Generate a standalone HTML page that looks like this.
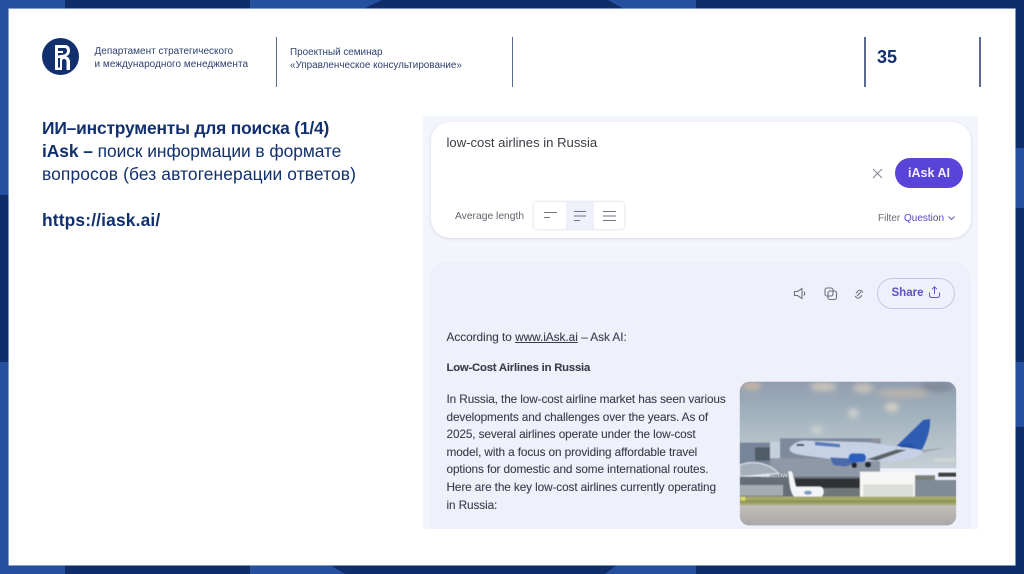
<!DOCTYPE html>
<html lang="ru"><head><meta charset="utf-8"><title>Slide 35</title>
<style>
html,body{margin:0;padding:0}
body{width:1024px;height:574px;position:relative;overflow:hidden;background:#0f2d69;font-family:"Liberation Sans",sans-serif}
#w{position:absolute;left:0;top:0;width:1024px;height:574px;overflow:hidden;filter:blur(.3px)}
.a{position:absolute;white-space:nowrap}
.l{position:absolute;background:#24509f}
.v{position:absolute;width:1.5px;background:#5a6a90;top:37px;height:50px}
.ink{color:#3a3d46;font-size:11.8px;left:446.5px;line-height:17.5px;letter-spacing:-.11px;-webkit-text-stroke:.1px #3a3d46}
.h{color:#12306d;font-size:17.4px;left:42px;line-height:23px}
</style></head><body><div id="w">
<div class="l" style="left:0;top:0;width:65px;height:9px"></div>
<div class="l" style="left:250px;top:0;width:446px;height:9px"></div>
<svg class="a" style="left:0;top:0" width="1024" height="9"><path d="M382 0H608L624 9H363Z" fill="#0f2d69"/></svg>
<div class="l" style="left:0;top:565px;width:65px;height:9px"></div>
<div class="l" style="left:250px;top:565px;width:446px;height:9px"></div>
<svg class="a" style="left:0;top:565px" width="1024" height="9"><path d="M330 0H617L605 9H345Z" fill="#0f2d69"/></svg>
<div class="l" style="left:0;top:0;width:9px;height:195px"></div>
<div class="l" style="left:0;top:362px;width:9px;height:212px"></div>
<div class="l" style="left:1015px;top:362px;width:9px;height:65px"></div>
<div class="l" style="left:1015px;top:148px;width:9px;height:60px"></div>

<div class="a" style="left:9px;top:9px;width:1006px;height:556px;background:#fff;box-shadow:0 0 0 .7px #a9c0e6"></div>

<svg class="a" style="left:42px;top:38px" width="37" height="37" viewBox="0 0 37 37">
<circle cx="18.5" cy="18.5" r="18.5" fill="#12306d"/>
<path d="M13 7H23C26.500 7 28 9.500 28 12.500C28 15.500 26.500 17.500 24 18.300C26.500 19 28 21 28 24V32H24.500V24C24.500 22 23.500 21 22 21C20.500 21 20 22 20 24V32H13Z" fill="#fff"/>
<path d="M16 10H22.500C24.200 10 25 11 25 12.500C25 14.500 24 16 22 16.500L16 17.500V15H21V13H16ZM16 20H18V29.500H16Z" fill="#12306d"/>
</svg>
<div class="a" style="left:94.500px;top:45px;font-size:10px;line-height:13px;color:#2f4271">Департамент стратегического<br><span style="letter-spacing:.03px">и международного менеджмента</span></div>
<div class="v" style="left:275.500px"></div>
<div class="a" style="left:290px;top:46px;font-size:9.900px;line-height:13px;color:#2f4271">Проектный семинар<br>«Управленческое консультирование»</div>
<div class="v" style="left:511.500px"></div>
<div class="v" style="left:864px"></div>
<div class="a" style="left:877px;top:47px;font-size:18px;font-weight:700;color:#12306d;line-height:21px">35</div>
<div class="v" style="left:979px"></div>

<div class="a h" style="top:117px;font-weight:700;letter-spacing:-.18px">ИИ–инструменты для поиска (1/4)</div>
<div class="a h" style="top:140px;letter-spacing:-.06px"><b>iAsk –</b> поиск информации в формате</div>
<div class="a h" style="top:163px;letter-spacing:.11px">вопросов (без автогенерации ответов)</div>
<div class="a h" style="top:209px;font-weight:700;letter-spacing:.15px">https://iask.ai/</div>

<div class="a" style="left:423px;top:116px;width:555px;height:413px;background:#f3f5fd"></div>
<div class="a" style="left:431px;top:122px;width:540px;height:116px;background:#fff;border-radius:19px;box-shadow:0 1px 3px #d5d8e6"></div>
<div class="a" style="left:430px;top:262px;width:541px;height:267px;background:#eef0fb;border-radius:16px 16px 0 0"></div>

<div class="a" style="left:446.500px;top:134px;font-size:13.100px;line-height:18px;color:#3a3d46">low-cost airlines in Russia</div>
<svg class="a" style="left:871px;top:167px" width="13" height="13"><path d="M2 2L11 11M11 2L2 11" stroke="#858791" stroke-width="1.100" fill="none"/></svg>
<div class="a" style="left:895px;top:158px;width:68px;height:30px;border-radius:15px;background:#5943d8;color:#f0eeff;font-size:12.500px;font-weight:700;line-height:30px;text-align:center">iAsk AI</div>
<div class="a" style="left:455px;top:208.500px;font-size:10.300px;line-height:15px;color:#63656f">Average length</div>
<div class="a" style="left:534px;top:202px;width:90px;height:27px;background:#fff;border-radius:3px;box-shadow:0 0 3px #cfd2df"></div>
<div class="a" style="left:566px;top:202px;width:28px;height:27px;background:#eff0fa"></div>
<svg class="a" style="left:534px;top:202px" width="90" height="27" fill="none" stroke="#73757f" stroke-width="1">
<path d="M10 10.500H23M10 15.500H16"/><path d="M40 9.500H52M40 14H52M40 18.500H46"/><path d="M69 9.500H82M69 14H82M69 18.500H82"/></svg>
<div class="a" style="left:878px;top:211px;font-size:10px;line-height:15px;color:#6b6d76">Filter</div>
<div class="a" style="left:904px;top:211px;font-size:10px;line-height:15px;color:#5943c8">Question</div>
<svg class="a" style="left:947px;top:215px" width="9" height="7"><path d="M1.500 1.500L4.500 4.500L7.500 1.500" stroke="#6d5fc0" fill="none"/></svg>

<svg class="a" style="left:791px;top:285px" width="80" height="18" fill="none" stroke="#6f717c" stroke-width="1.100">
<path d="M3.500 6.500H6.500L11 3.500V13.500L6.500 10.500H3.500Z"/><path d="M13 6.500C14 8 14 9 13 10.500"/>
<rect x="34" y="3" width="8" height="8" rx="2"/><rect x="37" y="6" width="8.500" height="8.500" rx="2"/>
<path d="M65 10.500L66.500 12C67.500 13 69 12.800 69.800 12L72 9.800M73 7L71.500 5.500C70.500 4.500 69 4.700 68.200 5.500L66 7.700M67 10.500L71 6.500" transform="translate(-1,.5)"/></svg>
<div class="a" style="left:877px;top:278px;width:76px;height:29px;border:1px solid #c5c6e2;border-radius:16px"></div>
<div class="a" style="left:891.500px;top:286px;font-size:11.500px;font-weight:700;line-height:15px;color:#5f50c4">Share</div>
<svg class="a" style="left:927px;top:285px" width="15" height="15" fill="none" stroke="#6557c4" stroke-width="1"><path d="M7.500 9V2M5 4.200L7.500 1.800L10 4.200M2.500 7.500V10C2.500 11.500 3.500 12.500 5 12.500H10C11.500 12.500 12.500 11.500 12.500 10V7.500"/></svg>

<div class="a ink" style="top:328.500px;letter-spacing:-.02px">According to <span style="text-decoration:underline">www.iAsk.ai</span> – Ask AI:</div>
<div class="a ink" style="top:359.500px;font-weight:700;font-size:11.300px;letter-spacing:-.2px">Low-Cost Airlines in Russia</div>
<div class="a ink" style="top:391px">In Russia, the low-cost airline market has seen various</div>
<div class="a ink" style="top:408.600px">developments and challenges over the years. As of</div>
<div class="a ink" style="top:426.200px">2025, several airlines operate under the low-cost</div>
<div class="a ink" style="top:443.800px">model, with a focus on providing affordable travel</div>
<div class="a ink" style="top:461.400px">options for domestic and some international routes.</div>
<div class="a ink" style="top:479px">Here are the key low-cost airlines currently operating</div>
<div class="a ink" style="top:496.600px">in Russia:</div>

<svg class="a" style="left:720px;top:370px" width="304" height="204" viewBox="0 0 912 612">
<defs>
<clipPath id="c"><rect x="59" y="35" width="650" height="432" rx="30"/></clipPath>
<linearGradient id="s" x1="0" y1="0" x2="0" y2="1"><stop offset="0" stop-color="#8f9db0"/><stop offset=".45" stop-color="#a6b6c0"/><stop offset="1" stop-color="#c6cfd4"/></linearGradient>
<linearGradient id="t" x1="0" y1="0" x2="0" y2="1"><stop offset="0" stop-color="#c2beb8"/><stop offset="1" stop-color="#aaa8a8"/></linearGradient>
<filter id="b"><feGaussianBlur stdDeviation="1.500"/></filter><filter id="b2"><feGaussianBlur stdDeviation="9"/></filter>
</defs>
<g clip-path="url(#c)">
<rect x="59" y="35" width="650" height="260" fill="url(#s)"/>
<g filter="url(#b2)" fill="#c9c3ba">
<ellipse cx="95" cy="48" rx="30" ry="12" fill="#c8b6a4"/><ellipse cx="310" cy="50" rx="40" ry="14"/><ellipse cx="550" cy="70" rx="80" ry="14" fill="#b8b3ad"/><ellipse cx="430" cy="55" rx="30" ry="14"/><ellipse cx="515" cy="112" rx="20" ry="12" fill="#ddd4c4"/><ellipse cx="400" cy="130" rx="14" ry="14" fill="#d4d6d4"/><ellipse cx="290" cy="180" rx="18" ry="12" fill="#ccd0d0"/><ellipse cx="650" cy="50" rx="50" ry="14" fill="#7f8999"/>
</g>
<g filter="url(#b)">
<rect x="59" y="218" width="100" height="80" fill="#76859a"/>
<rect x="105" y="232" width="45" height="40" fill="#4f5d68"/>
<rect x="150" y="215" width="30" height="50" fill="#c5d0dc"/>
<rect x="180" y="205" width="275" height="70" fill="#7d8b9c"/>
<rect x="455" y="205" width="27" height="20" fill="#8d939c"/>
<rect x="150" y="265" width="330" height="60" fill="#8f98a6"/>
<path d="M59 285C100 270 150 280 175 310L59 320Z" fill="#a6aeba" stroke="#e4e8ee" stroke-width="3"/>
<rect x="59" y="320" width="370" height="60" fill="#666d76"/>
<rect x="225" y="326" width="200" height="28" fill="#2e3136"/>
<rect x="59" y="345" width="130" height="32" fill="#a5acb2"/>
<rect x="225" y="355" width="200" height="25" fill="#70787a"/>
<path d="M208 238C212 226 230 214 250 212L450 217C480 222 520 228 535 230L590 238C600 240 610 245 615 240C600 262 560 272 520 274L420 272L340 268L250 256C225 252 212 248 208 238Z" fill="#c6d1e6"/>
<path d="M530 228L610 150L630 147C632 175 622 210 605 240Z" fill="#2f5cb2"/>
<path d="M532 224L570 222L590 232L545 232Z" fill="#2452a5"/>
<path d="M600 240L680 232L610 248Z" fill="#a0a8b0"/>
<path d="M330 262L440 268L375 290L340 285Z" fill="#4b6ba8"/>
<rect x="386" y="250" width="52" height="26" rx="12" fill="#2a60c0"/>
<path d="M440 268L530 238L560 240L470 272Z" fill="#5e6367"/>
<rect x="395" y="278" width="16" height="16" rx="7" fill="#22262c"/>
<rect x="435" y="276" width="18" height="16" rx="7" fill="#22262c"/>
<path d="M285 215L360 222V232L285 226Z" fill="#5a7ab8"/>
<rect x="230" y="222" width="22" height="6" fill="#3a4250"/>
<rect x="420" y="305" width="165" height="75" fill="#f6f6f5"/>
<rect x="430" y="343" width="150" height="37" fill="#dcdedc"/>
<rect x="585" y="330" width="124" height="50" fill="#7f8b96"/>
<rect x="655" y="308" width="54" height="12" fill="#3a4240"/>
<rect x="585" y="316" width="60" height="14" fill="#788078"/>
<rect x="640" y="265" width="69" height="10" fill="#cfd3d4"/>
<path d="M205 303L216 305L228 350H300C312 352 315 370 305 380H225C215 378 208 350 205 303Z" fill="#f4f5f7"/>
<ellipse cx="264" cy="368" rx="12" ry="6" fill="#7b9ac0"/>
<rect x="59" y="380" width="650" height="26" fill="#a4a767"/>
<rect x="59" y="390" width="650" height="8" fill="#8f9558"/>
<rect x="62" y="380" width="14" height="12" fill="#d8d860"/>
<rect x="59" y="405" width="650" height="62" fill="url(#t)"/>
</g>
<text x="122" y="322" font-family="Liberation Sans,sans-serif" font-size="17" fill="#d4d8dc">MOSCOW</text>
</g>
</svg>
</div></body></html>
